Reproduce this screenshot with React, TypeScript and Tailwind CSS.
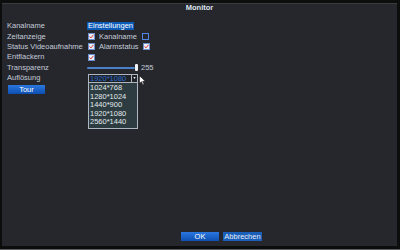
import { FC } from "react";

const font = { fontFamily: '"Liberation Sans", Arial, sans-serif' };

const CheckBox: FC<{ checked?: boolean }> = ({ checked }) => (
  <span
    className={
      checked
        ? "w-[7px] h-[7px] bg-[#e9eef6] border border-[#6b8fd0] flex items-center justify-center"
        : "w-[7px] h-[7px] bg-[#26272c] border border-[#4f86e8] flex"
    }
  >
    {checked && (
      <svg viewBox="0 0 6 6" className="w-[5px] h-[5px]">
        <path d="M0.6 3 L2.3 4.7 L5.4 1" stroke="#d8383a" strokeWidth="1.2" fill="none" />
      </svg>
    )}
  </span>
);

const resolutions = ["1024*768", "1280*1024", "1440*900", "1920*1080", "2560*1440"];

const App: FC = () => {
  return (
    <div
      className="w-[400px] h-[250px] bg-[#0c0e0e] pt-[3px] pl-[2px] pr-[3px] pb-[3px] border-b border-[#5a5c5e]"
      style={font}
    >
      <div className="h-full bg-[#26272c] border-t border-[#3a3c40] flex flex-col text-[7.5px] leading-[10px] text-[#c3cbda]">
        <div className="h-[8px] leading-[7px] text-center font-bold text-[#dde4ee]">Monitor</div>
        <div className="px-[5px] pt-[9px] grid grid-cols-[81px_1fr] auto-rows-[10.4px] items-center">
          <div>Kanalname</div>
          <div className="flex">
            <span className="bg-[#0d5bb8] text-white px-[1px] leading-[8px] -ml-[1px]">Einstellungen</span>
          </div>

          <div>Zeitanzeige</div>
          <div className="flex items-center">
            <CheckBox checked />
            <span className="ml-[4px] w-[43px]">Kanalname</span>
            <CheckBox />
          </div>

          <div>Status Videoaufnahme</div>
          <div className="flex items-center">
            <CheckBox checked />
            <span className="ml-[4px] w-[44px]">Alarmstatus</span>
            <CheckBox checked />
          </div>

          <div>Entflackern</div>
          <div className="flex items-center">
            <CheckBox checked />
          </div>

          <div>Transparenz</div>
          <div className="flex items-center -ml-[1px]">
            <div className="w-[48px] h-[2px] bg-[#4a7fc8] rounded-full" />
            <div className="w-[3px] h-[7px] bg-[#f0f2f6] rounded-[1px]" />
            <span className="ml-[3px]">255</span>
          </div>

          <div>Auflösung</div>
          <div className="relative flex items-center">
            <div className="w-[50px] h-[9px] border border-[#aeb6c0] bg-[#1f2328] flex items-center">
              <span className="flex-1 pl-[1px] text-[#2c6cd0] leading-[7px]">1920*1080</span>
              <span className="w-[6px] h-full border-l border-[#aeb6c0] flex items-center justify-center">
                <svg viewBox="0 0 4 3" className="w-[3px] h-[2px]">
                  <path d="M0 0 H4 L2 3 Z" fill="#e0e4ea" />
                </svg>
              </span>
            </div>
            <svg viewBox="0 0 8 12" className="absolute left-[51px] top-[1px] w-[7px] h-[11px]">
              <path d="M0.5 0.5 V9.5 L2.8 7.4 L4.4 11 L5.8 10.4 L4.3 6.9 L7.3 6.9 Z" fill="#ffffff" stroke="#111" strokeWidth="0.7" />
            </svg>
            <div className="absolute left-0 top-[9.7px] w-[50px] bg-[#2c3c40] border border-[#aeb6c0] border-t-0 pt-[1px] pb-[2px] text-[#e3eaee] z-10">
              {resolutions.map((r) => (
                <div key={r} className="pl-[1px] leading-[8.4px]">
                  {r}
                </div>
              ))}
            </div>
          </div>
        </div>
        <div className="px-[6px] mt-[2px]">
          <div className="w-[37px] h-[9px] bg-gradient-to-b from-[#2a78e0] to-[#0c4fb0] text-white text-center leading-[9px]">
            Tour
          </div>
        </div>
        <div className="mt-auto mb-[5px] ml-[179px] flex gap-[4px]">
          <div className="w-[38px] h-[9px] bg-gradient-to-b from-[#2a78e0] to-[#0c4fb0] text-white text-center leading-[9px]">
            OK
          </div>
          <div className="w-[39px] h-[9px] bg-[#1a5fb8] text-[#e6ecf4] text-center leading-[9px]">
            Abbrechen
          </div>
        </div>
      </div>
    </div>
  );
};

export default App;
